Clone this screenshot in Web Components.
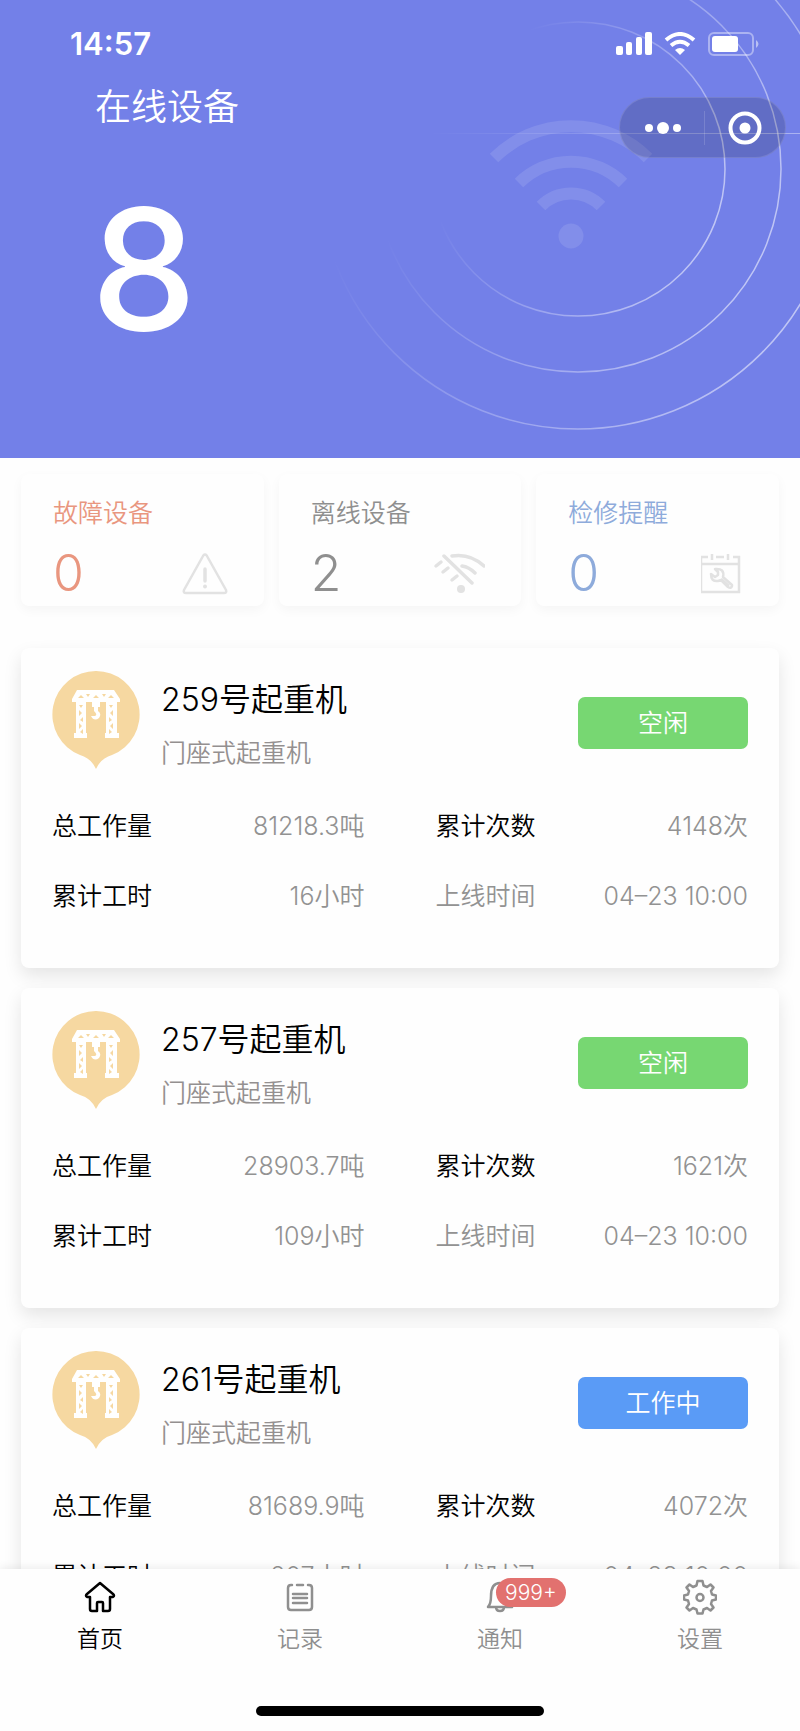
<!DOCTYPE html>
<html lang="zh-CN">
<head>
<meta charset="UTF-8">
<meta name="viewport" content="width=device-width, initial-scale=1.0">
<title>在线设备</title>
<style>
    body {
        margin: 0;
        background: #fefefe;
        color: #000;
        font-family: Inter, 'Noto Sans CJK SC', sans-serif;
        font-size: 25px;
        font-weight: 350;
        line-height: 36px;
    }
</style>
</head>
<body>
<device-app>
    <hero-banner slot="hero" label="在线设备" count="8"></hero-banner>

    <stat-card slot="stats" label="故障设备" value="0" icon="warning" style="--tone: #e9967f"></stat-card>
    <stat-card slot="stats" label="离线设备" value="2" icon="offline" style="--tone: #8f8f8f"></stat-card>
    <stat-card slot="stats" label="检修提醒" value="0" icon="repair" style="--tone: #8eabdb"></stat-card>

    <crane-card name="259号起重机" kind="门座式起重机" status="空闲" load="81218.3吨" times="4148次" hours="16小时" online="04–23 10:00"></crane-card>
    <crane-card name="257号起重机" kind="门座式起重机" status="空闲" load="28903.7吨" times="1621次" hours="109小时" online="04–23 10:00"></crane-card>
    <crane-card name="261号起重机" kind="门座式起重机" status="工作中" load="81689.9吨" times="4072次" hours="207小时" online="04–23 10:00" busy></crane-card>

    <tab-item slot="tabs" icon="home" active>首页</tab-item>
    <tab-item slot="tabs" icon="record">记录</tab-item>
    <tab-item slot="tabs" icon="bell" badge="999+">通知</tab-item>
    <tab-item slot="tabs" icon="gear">设置</tab-item>
</device-app>

<script>
(function () {
    'use strict';

    const STAT_ICONS = {
        warning: `
            <svg width="46" height="42" viewBox="0 0 46 42" fill="none" stroke="currentColor" stroke-width="2.500" stroke-linecap="round" stroke-linejoin="round">
                <path d="M21.300 2.500Q23 .5 24.700 2.500L44 37Q45 40 42 40H4Q1 40 2 37Z"/>
                <path d="M23 16V28" stroke-width="3.500"/>
                <circle cx="23" cy="33.500" r="2" fill="currentColor" stroke="none"/>
            </svg>`,
        offline: `
            <svg width="52" height="42" viewBox="-1 0 52 42" fill="none" stroke="currentColor" stroke-width="3.500" stroke-linecap="round">
                <path d="M10 3 38 30M18 3Q36 0 50 13M28 13Q35 14 41 20"/>
                <path d="M2 13 7 9M9 19 14 15M18 27 23 23"/>
                <circle cx="27" cy="36" r="4" fill="currentColor" stroke="none"/>
            </svg>`,
        repair: `
            <svg width="42" height="42" viewBox="2 0 42 42" fill="none" stroke="currentColor" stroke-width="2.500">
                <path d="M9 4H2V39H40V4H34M17 4H25M2 11H40M13 1V7M29 1V7"/>
                <path d="M16 16 19 19V22L16 24 12 21Q12 29 19 28L22 27 29 34Q32 36 33 33L33 32 24 24Q26 15 16 16ZM22 26 30 33" stroke-linejoin="round"/>
            </svg>`
    };

    const TAB_ICONS = {
        home: `<path d="M17 4 4 15Q2 17 4 18H7V30Q7 32 9 32H14V24Q14 23 15 23H19Q20 23 20 24V32H25Q27 32 27 30V18H30Q32 17 30 15Z"/>`,
        record: `<path d="M9 6H8Q5 6 5 9V28Q5 31 8 31H26Q29 31 29 28V9Q29 6 26 6H25M14 6H20M10 15H24M10 19H24M10 24H24"/>`,
        bell: `<path d="M5 28Q8 25 8 17 8 4 17 4T26 17Q26 25 29 28ZM13 28Q13 32 17 32T21 28"/>`,
        gear: `
            <path d="M14.500 2H19.500L20.500 6.500 24 8 27.500 5.500 30.500 8.500 28 12 29 15.500 33 16.500V20.500L29 21.500 28 25 30.500 28.500 27.500 31.500 24 29 20.500 30.500 19.500 34.500H14.500L13.500 30.500 10 29 6.500 31.500 3.500 28.500 6 25 5 21.500 1 20.500V16.500L5 15.500 6 12 3.500 8.500 6.500 5.500 10 8 13.500 6.500Z"/>
            <circle cx="17" cy="18.500" r="3.500"/>`
    };

    class DeviceApp extends HTMLElement {
        constructor() {
            super();
            this.attachShadow({ mode: 'open' });
        }

        connectedCallback() {
            this.shadowRoot.innerHTML = `
                <style>
                    :host {
                        display: flex;
                        flex-direction: column;
                        height: 100vh;
                        overflow: hidden;
                    }

                    main {
                        flex: 1;
                        min-height: 0;
                        overflow: hidden;
                    }

                    .stats {
                        display: grid;
                        grid-template-columns: repeat(3, 1fr);
                        gap: 15px;
                        padding: 16px 21px 42px;
                    }

                    .list {
                        display: flex;
                        flex-direction: column;
                        gap: 20px;
                        padding: 0 21px;
                    }

                    footer {
                        position: relative;
                        background: #fefefe;
                        box-shadow: 0 -2px 8px rgba(0, 0, 0, 0.07);
                    }

                    nav {
                        display: grid;
                        grid-template-columns: repeat(4, 1fr);
                        padding-top: 10px;
                    }

                    .indicator {
                        width: 36%;
                        height: 10px;
                        margin: 50px auto 15px;
                        border-radius: 5px;
                        background: #000;
                    }
                </style>

                <main>
                    <slot name="hero"></slot>
                    <div class="stats"><slot name="stats"></slot></div>
                    <div class="list"><slot></slot></div>
                </main>
                <footer>
                    <nav><slot name="tabs"></slot></nav>
                    <div class="indicator"></div>
                </footer>
            `;
        }
    }

    class HeroBanner extends HTMLElement {
        constructor() {
            super();
            this.attachShadow({ mode: 'open' });
        }

        connectedCallback() {
            this.shadowRoot.innerHTML = `
                <style>
                    :host {
                        display: block;
                        position: relative;
                        overflow: hidden;
                        height: 458px;
                        background: #7380e8;
                        color: #fff;
                    }

                    .rings {
                        position: absolute;
                        top: 0;
                        right: 0;
                    }

                    .content {
                        position: relative;
                    }

                    .status {
                        display: flex;
                        justify-content: space-between;
                        align-items: center;
                        padding: 26px 41px 0 70px;
                    }

                    time {
                        font-size: 31px;
                        font-weight: 600;
                    }

                    .capsule {
                        position: absolute;
                        top: 97px;
                        right: 14px;
                        box-sizing: border-box;
                        width: 167px;
                        height: 61px;
                        display: flex;
                        align-items: center;
                        border: 1px solid rgba(255, 255, 255, 0.12);
                        border-radius: 31px;
                        background: rgba(0, 0, 0, 0.15);
                    }

                    .capsule button {
                        flex: 1;
                        display: flex;
                        justify-content: center;
                        padding: 0 0 0 3px;
                        border: 0;
                        background: none;
                        color: inherit;
                        cursor: pointer;
                    }

                    .capsule button + button {
                        padding: 0;
                        border-left: 1px solid rgba(255, 255, 255, 0.15);
                    }

                    h1 {
                        margin: 18px 0 0 95px;
                        font-size: 36px;
                        font-weight: 350;
                        line-height: 54px;
                    }

                    .count {
                        margin: 35px 0 0 91px;
                        font-size: 168px;
                        font-weight: 500;
                        line-height: 200px;
                    }
                </style>

                <svg class="rings" width="800" height="458" viewBox="0 0 800 458" fill="none" aria-hidden="true">
                    <defs>
                        <linearGradient id="fade" x1="0.180" y1="0.350" x2="0.950" y2="0.710">
                            <stop offset="0" stop-color="#fff" stop-opacity="0"/>
                            <stop offset="1" stop-color="#fff" stop-opacity="0.550"/>
                        </linearGradient>
                        <linearGradient id="beam">
                            <stop offset="0" stop-color="#fff" stop-opacity="0"/>
                            <stop offset="1" stop-color="#fff" stop-opacity="0.400"/>
                        </linearGradient>
                    </defs>
                    <g stroke="url(#fade)" stroke-width="1.500">
                        <circle cx="578" cy="169" r="147"/>
                        <circle cx="578" cy="169" r="203"/>
                        <circle cx="578" cy="169" r="260"/>
                    </g>
                    <rect x="430" y="133" width="370" height="1" fill="url(#beam)"/>
                    <g stroke="#fff" stroke-opacity="0.110" stroke-width="12">
                        <path d="M494 158A109 109 0 0 1 648 158"/>
                        <path d="M519 183A74 74 0 0 1 623 183"/>
                        <path d="M541 206A42 42 0 0 1 601 206"/>
                    </g>
                    <circle cx="571" cy="236" r="12.500" fill="#fff" fill-opacity="0.110"/>
                </svg>

                <div class="content">
                    <div class="status">
                        <time>14:57</time>
                        <svg width="143" height="24" viewBox="0 0 143 24" fill="#fff" aria-hidden="true">
                            <rect x="0" y="14" width="7" height="9" rx="2"/>
                            <rect x="10" y="10" width="6" height="13" rx="2"/>
                            <rect x="20" y="5" width="6" height="18" rx="2"/>
                            <rect x="29" y="0" width="7" height="23" rx="2"/>
                            <g fill="none" stroke="#fff" stroke-width="4">
                                <path d="M50 8Q64-4 78 8"/>
                                <path d="M55 13.500Q64 6 73 13.500"/>
                            </g>
                            <path d="M59 18Q64 14 69 18L64 23Z"/>
                            <rect x="93" y="1" width="44" height="22" rx="5" fill="none" stroke="#fff" stroke-opacity="0.400" stroke-width="2"/>
                            <rect x="96" y="4" width="26" height="16" rx="3"/>
                            <path d="M140 8Q145 12 140 16Z" fill-opacity="0.500"/>
                        </svg>
                    </div>
                    <h1></h1>
                    <div class="count"></div>
                </div>

                <div class="capsule">
                    <button type="button" aria-label="更多">
                        <svg width="36" height="34" viewBox="0 0 36 34" fill="#fff">
                            <circle cx="4" cy="17" r="4"/>
                            <circle cx="18" cy="17" r="6"/>
                            <circle cx="32" cy="17" r="4"/>
                        </svg>
                    </button>
                    <button type="button" aria-label="关闭">
                        <svg width="34" height="34" viewBox="0 0 34 34" fill="#fff">
                            <circle cx="17" cy="17" r="14.500" fill="none" stroke="#fff" stroke-width="4"/>
                            <circle cx="17" cy="17" r="5.500"/>
                        </svg>
                    </button>
                </div>
            `;
            this.shadowRoot.querySelector('h1').textContent = this.getAttribute('label');
            this.shadowRoot.querySelector('.count').textContent = this.getAttribute('count');
        }
    }

    class StatCard extends HTMLElement {
        constructor() {
            super();
            this.attachShadow({ mode: 'open' });
        }

        connectedCallback() {
            this.shadowRoot.innerHTML = `
                <style>
                    :host {
                        display: block;
                        padding: 21px 36px 4px 32px;
                        border-radius: 8px;
                        background: #fefefe;
                        box-shadow: 0 4px 12px rgba(0, 0, 0, 0.04);
                        color: var(--tone);
                    }

                    .row {
                        display: flex;
                        align-items: center;
                        justify-content: space-between;
                        margin-top: 14px;
                    }

                    .value {
                        font-size: 50px;
                        line-height: 57px;
                    }

                    svg {
                        display: block;
                        color: #e2e2e2;
                    }
                </style>

                <div class="label"></div>
                <div class="row">
                    <span class="value"></span>
                    ${STAT_ICONS[this.getAttribute('icon')]}
                </div>
            `;
            this.shadowRoot.querySelector('.label').textContent = this.getAttribute('label');
            this.shadowRoot.querySelector('.value').textContent = this.getAttribute('value');
        }
    }

    class CraneCard extends HTMLElement {
        constructor() {
            super();
            this.attachShadow({ mode: 'open' });
        }

        connectedCallback() {
            this.render();

            ['name', 'kind', 'status', 'load', 'times', 'hours', 'online'].forEach((key) => {
                this.shadowRoot.querySelector('.' + key).textContent = this.getAttribute(key);
            });
        }

        render() {
            this.shadowRoot.innerHTML = `
                <style>
                    :host {
                        display: block;
                        padding: 23px 31px 54px;
                        border-radius: 8px;
                        background: #fefefe;
                        box-shadow: 0 8px 18px rgba(0, 0, 0, 0.1);
                    }

                    header {
                        display: flex;
                        align-items: center;
                        min-height: 104px;
                        margin-bottom: 33px;
                    }

                    .pin {
                        flex: none;
                        align-self: flex-start;
                        margin-right: 21px;
                    }

                    .text {
                        flex: 1;
                    }

                    h2 {
                        margin: 0 0 11px;
                        font-size: 32px;
                        font-weight: 350;
                        line-height: 48px;
                    }

                    .kind {
                        margin: 0;
                        color: #949090;
                    }

                    .status {
                        width: 170px;
                        height: 52px;
                        padding: 0;
                        border: 0;
                        border-radius: 7px;
                        background: #77d772;
                        color: #fff;
                        font: inherit;
                        cursor: pointer;
                    }

                    :host([busy]) .status {
                        background: #5a9bf6;
                    }

                    dl {
                        display: grid;
                        grid-template-columns: 1fr 1fr;
                        gap: 34px 71px;
                        margin: 0;
                    }

                    dl div {
                        display: flex;
                        justify-content: space-between;
                    }

                    dd {
                        margin: 0;
                    }

                    dd,
                    .muted {
                        color: #929292;
                    }
                </style>

                <header>
                    <svg class="pin" width="88" height="98" viewBox="0 0 88 98" aria-hidden="true">
                        <path d="M44 0A43.500 43.500 0 0 1 60 84Q49 87 44 98 39 87 28 84A43.500 43.500 0 0 1 44 0Z" fill="#f6d8a1"/>
                        <path d="M25 19H62L68 28V31H65V62H67V67H53V62H54V31H48V36H46V40Q50 43 47 47 42 51 39 45L43 45Q46 44 42 40V36H40V31H34V62H35V67H22V62H24V31H20V28Z" fill="#fff"/>
                        <g fill="#f6d8a1">
                            <path d="M26 27 29 24 32 27ZM34 23H38L36 26ZM41 27 44 24 47 27ZM50 23H54L52 26ZM56 27 59 24 62 27Z"/>
                            <path d="M27 34H31L29 37ZM27 39 30 42 27 45ZM31 46V51L28 49ZM27 52 30 55 27 58ZM28 61 31 58V63Z"/>
                            <path d="M57 34H61L59 37ZM61 39 58 42 61 45ZM57 46V51L60 49ZM61 52 58 55 61 58ZM60 61 57 58V63Z"/>
                        </g>
                    </svg>
                    <div class="text">
                        <h2 class="name"></h2>
                        <p class="kind"></p>
                    </div>
                    <button class="status" type="button"></button>
                </header>

                <dl>
                    <div><dt>总工作量</dt><dd class="load"></dd></div>
                    <div><dt>累计次数</dt><dd class="times"></dd></div>
                    <div><dt>累计工时</dt><dd class="hours"></dd></div>
                    <div><dt class="muted">上线时间</dt><dd class="online"></dd></div>
                </dl>
            `;
        }
    }

    class TabItem extends HTMLElement {
        constructor() {
            super();
            this.attachShadow({ mode: 'open' });
        }

        connectedCallback() {
            const badge = this.getAttribute('badge');

            this.shadowRoot.innerHTML = `
                <style>
                    :host {
                        display: block;
                    }

                    a {
                        display: flex;
                        flex-direction: column;
                        align-items: center;
                        gap: 6px;
                        color: #8f8f8f;
                        font-size: 23px;
                        line-height: 34px;
                        text-decoration: none;
                    }

                    :host([active]) a {
                        color: #000;
                    }

                    .icon {
                        position: relative;
                        height: 37px;
                    }

                    .badge {
                        position: absolute;
                        top: -1px;
                        left: 13px;
                        padding: 0 9px;
                        border-radius: 15px;
                        background: #e2716f;
                        color: #fff;
                        font-size: 21px;
                        line-height: 29px;
                    }
                </style>

                <a href="#">
                    <span class="icon">
                        <svg width="34" height="37" viewBox="0 0 34 37" fill="none" stroke="currentColor" stroke-width="2.500" stroke-linecap="round" stroke-linejoin="round" aria-hidden="true">
                            ${TAB_ICONS[this.getAttribute('icon')]}
                        </svg>
                        ${badge ? `<span class="badge">${badge}</span>` : ''}
                    </span>
                    <slot></slot>
                </a>
            `;
        }
    }

    customElements.define('device-app', DeviceApp);
    customElements.define('hero-banner', HeroBanner);
    customElements.define('stat-card', StatCard);
    customElements.define('crane-card', CraneCard);
    customElements.define('tab-item', TabItem);
})();
</script>
</body>
</html>
